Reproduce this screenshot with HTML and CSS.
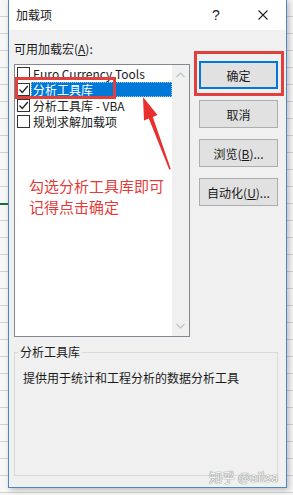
FILE: index.html
```html
<!DOCTYPE html>
<html lang="zh-CN">
<head>
  <meta charset="UTF-8">
  <meta name="viewport" content="width=device-width, initial-scale=1.0">
  <title>加载项</title>
  <link rel="stylesheet" href="styles.css">
</head>
<body>
  <div class="sheet">
    <div class="green-line"></div>

    <!-- Dialog -->
    <div class="dialog">
      <div class="titlebar">
        <span class="title">加载项</span>
        <span class="help">?</span>
        <svg class="close" width="10" height="10" viewBox="0 0 10 10">
          <path d="M0.5 0.5 L9.5 9.5 M9.5 0.5 L0.5 9.5" stroke="#222" stroke-width="1.1" fill="none"/>
        </svg>
      </div>

      <div class="content">
        <div class="label">可用加载宏(<u>A</u>):</div>

        <div class="main">
          <div class="listbox">
            <div class="list-area">
              <ul class="items">
                <li><span class="cb"></span><span class="txt">Euro Currency Tools</span></li>
                <li class="selected">
                  <span class="cb"><svg width="11" height="11" viewBox="0 0 11 11"><path d="M1.5 5.5 L4.3 8.5 L9.8 2" stroke="#222" stroke-width="1.3" fill="none"/></svg></span>
                  <span class="txt">分析工具库</span>
                  <span class="mark-row"></span>
                </li>
                <li><span class="cb"><svg width="11" height="11" viewBox="0 0 11 11"><path d="M1.5 5.5 L4.3 8.5 L9.8 2" stroke="#222" stroke-width="1.3" fill="none"/></svg></span><span class="txt">分析工具库 - VBA</span></li>
                <li><span class="cb"></span><span class="txt">规划求解加载项</span></li>
              </ul>
              <div class="note">勾选分析工具库即可<br>记得点击确定</div>
            </div>
            <div class="scrollbar">
              <svg width="9" height="6" viewBox="0 0 9 6"><path d="M0.5 5 L4.5 1 L8.5 5" stroke="#c2c2c2" stroke-width="1.2" fill="none"/></svg>
              <svg width="9" height="6" viewBox="0 0 9 6"><path d="M0.5 1 L4.5 5 L8.5 1" stroke="#c2c2c2" stroke-width="1.2" fill="none"/></svg>
            </div>
          </div>

          <div class="buttons">
            <button class="btn default">确定<span class="mark-btn"></span></button>
            <button class="btn">取消</button>
            <button class="btn">浏览(<u>B</u>)...</button>
            <button class="btn">自动化(<u>U</u>)...</button>
          </div>
        </div>

        <fieldset class="group">
          <legend>分析工具库</legend>
          <p>提供用于统计和工程分析的数据分析工具</p>
        </fieldset>
      </div>
    </div>

    <!-- annotation arrow -->
    <svg class="arrow" width="293" height="495" viewBox="0 0 293 495">
      <polygon points="143,97 157.5,115 152.8,117 170.8,169 169.2,169.5 148.8,118.5 144,120.5" fill="#e8312f"/>
    </svg>

    <div class="watermark">知乎 @ailsa</div>
  </div>
</body>
</html>
```

FILE: styles.css
```css
/* base */
body {
  margin: 0;
  padding: 0;
  font-family: "Noto Sans CJK SC", "Noto Sans", sans-serif;
  font-size: 12px;
  color: #1a1a1a;
}

/* spreadsheet behind the dialog */
.sheet {
  position: relative;
  width: 293px;
  height: 495px;
  overflow: hidden;
  background-color: #f7f7f7;
  background-image: repeating-linear-gradient(to bottom, transparent 0, transparent 16px, #d2d2d2 16px, #d2d2d2 17px);
  padding-top: 1px;
  box-sizing: border-box;
}

.green-line {
  position: absolute;
  left: 0;
  top: 203px;
  width: 8px;
  height: 2px;
  background-color: #1d6b3e;
}

/* dialog */
.dialog {
  margin: -2px 0 0 8px;
  width: 277px;
  height: 487px;
  border: 1px solid #4f86c0;
  background-color: #f0f0f0;
  display: flex;
  flex-direction: column;
  box-shadow: 2px 2px 6px rgba(0, 0, 0, 0.25);
}

.titlebar {
  height: 30px;
  background-color: #ffffff;
  display: flex;
  align-items: center;
  flex-shrink: 0;
}

.title {
  margin-left: 7px;
  font-size: 12px;
  line-height: 16px;
}

.help {
  margin-left: 160px;
  font-family: "Liberation Sans", sans-serif;
  font-size: 14px;
}

.close {
  margin-left: 38px;
}

.content {
  flex: 1;
  display: flex;
  flex-direction: column;
  padding: 0 8px 11px 5px;
}

.label {
  margin-top: 11px;
  line-height: 16px;
}

.main {
  display: flex;
  align-items: flex-start;
  margin-top: 4px;
}

/* listbox */
.listbox {
  margin-top: 3px;
  width: 176px;
  height: 273px;
  box-sizing: border-box;
  border: 1px solid #828790;
  background-color: #ffffff;
  display: flex;
}

.list-area {
  flex: 1;
}

.items {
  list-style: none;
  margin: 0;
  padding: 0;
}

.items li {
  position: relative;
  height: 16px;
  display: flex;
  align-items: center;
  padding-left: 2px;
}

.cb {
  width: 13px;
  height: 13px;
  box-sizing: border-box;
  border: 1px solid #333333;
  background-color: #ffffff;
  display: flex;
  align-items: center;
  justify-content: center;
  flex-shrink: 0;
}

.txt {
  flex: 1;
  margin-left: 1px;
  padding-left: 2px;
  line-height: 15px;
  white-space: nowrap;
}

.selected .txt {
  background-color: #0078d7;
  color: #ffffff;
  outline: 1px dotted #9fc6ec;
  outline-offset: -1px;
}

/* red box round the selected row */
.mark-row {
  position: absolute;
  left: 0;
  top: -4px;
  width: 101px;
  height: 22px;
  box-sizing: border-box;
  border: 3px solid #e2403f;
}

.note {
  margin-top: 46px;
  padding-left: 14px;
  font-size: 15px;
  line-height: 21px;
  color: #e23b3b;
}

.scrollbar {
  width: 17px;
  background-color: #f0f0f0;
  display: flex;
  flex-direction: column;
  justify-content: space-between;
  align-items: center;
  padding: 7px 0 7px;
}

/* buttons */
.buttons {
  margin-left: 9px;
  display: flex;
  flex-direction: column;
  gap: 11px;
}

.btn {
  position: relative;
  width: 79px;
  height: 28px;
  border: 1px solid #adadad;
  background-color: #e1e1e1;
  font-family: "Noto Sans CJK SC", "Noto Sans", sans-serif;
  font-size: 12px;
  color: #1a1a1a;
  padding: 0;
}

.btn.default {
  border: 2px solid #0078d7;
}

.mark-btn {
  position: absolute;
  left: -7px;
  top: -12px;
  right: -8px;
  bottom: -9px;
  border: 3px solid #e2403f;
}

/* group box */
.group {
  flex: 1;
  margin: 7px 0 0 0;
  padding: 0 0 0 8px;
  border: 1px solid #dadada;
  min-width: 0;
}

.group legend {
  margin-left: -5px;
  padding: 0 2px;
  line-height: 16px;
}

.group p {
  margin: 10px 0 0 0;
  line-height: 16px;
}

.arrow {
  position: absolute;
  left: 0;
  top: 0;
}

.watermark {
  position: absolute;
  left: 209px;
  top: 467px;
  font-size: 13px;
  color: rgba(255, 255, 255, 0.95);
  text-shadow: 0 0 1px #777, 0 0 1px #777;
}
```
